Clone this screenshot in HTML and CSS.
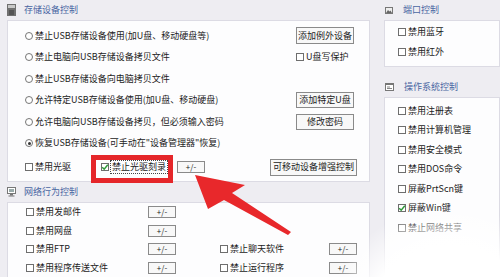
FILE: index.html
```html
<!DOCTYPE html>
<html>
<head>
<meta charset="utf-8">
<link rel="stylesheet" href="styles.css">
</head>
<body>
<div class="page">
  <div class="col-left">
    <div class="sec-head">
      <svg class="ico" width="9" height="12" viewBox="0 0 9 12"><rect x="0" y="0" width="9" height="12" fill="#707070"/><rect x="1" y="1" width="7" height="3" fill="#c8c8c8"/><rect x="2" y="6" width="5" height="5" fill="#555"/></svg>
      <span class="sec-title">存储设备控制</span>
    </div>
    <div class="panel storage">
      <div class="row">
        <span class="opt"><span class="radio"></span>禁止USB存储设备使用(加U盘、移动硬盘等)</span>
        <span class="slot"><span class="btn b17">添加例外设备</span></span>
      </div>
      <div class="row">
        <span class="opt"><span class="radio"></span>禁止电脑向USB存储设备拷贝文件</span>
        <span class="slot"><span class="opt"><span class="chk"></span>U盘写保护</span></span>
      </div>
      <div class="row">
        <span class="opt"><span class="radio"></span>禁止USB存储设备向电脑拷贝文件</span>
      </div>
      <div class="row">
        <span class="opt"><span class="radio"></span>允许特定USB存储设备使用(加U盘、移动硬盘)</span>
        <span class="slot"><span class="btn b16">添加特定U盘</span></span>
      </div>
      <div class="row">
        <span class="opt"><span class="radio"></span>允许电脑向USB存储设备拷贝，但必须输入密码</span>
        <span class="slot"><span class="btn b16">修改密码</span></span>
      </div>
      <div class="row">
        <span class="opt"><span class="radio on"></span>恢复USB存储设备(可手动在"设备管理器"恢复)</span>
      </div>
      <div class="row last">
        <span class="opt w76"><span class="chk"></span>禁用光驱</span>
        <span class="opt w76"><span class="chk on"><svg width="8" height="8" viewBox="0 0 8 8"><path d="M1.2 4.2 L3.2 6.2 L6.8 1.8" fill="none" stroke="#2f9a3a" stroke-width="1.5"/></svg></span><span class="focus">禁止光驱刻录</span></span>
        <span class="btn pm">+/-</span>
        <span class="btn b17 wide">可移动设备增强控制</span>
      </div>
    </div>
    <div class="sec-head">
      <svg class="ico" width="9" height="10" viewBox="0 0 9 10"><rect x="0.5" y="0.5" width="8" height="6" fill="#fff" stroke="#777"/><rect x="2" y="2" width="5" height="3" fill="#9aa"/><rect x="3" y="7" width="3" height="1.5" fill="#777"/><rect x="1.5" y="8.5" width="6" height="1" fill="#777"/></svg>
      <span class="sec-title">网络行为控制</span>
    </div>
    <div class="panel net">
      <span class="opt"><span class="chk"></span>禁用发邮件</span><span class="btn pm">+/-</span><span></span><span></span><span></span>
      <span class="opt"><span class="chk"></span>禁用网盘</span><span class="btn pm">+/-</span><span></span><span></span><span></span>
      <span class="opt"><span class="chk"></span>禁用FTP</span><span class="btn pm">+/-</span><span></span><span class="opt"><span class="chk"></span>禁止聊天软件</span><span class="btn pm">+/-</span>
      <span class="opt"><span class="chk"></span>禁用程序传送文件</span><span class="btn pm">+/-</span><span></span><span class="opt"><span class="chk"></span>禁止运行程序</span><span class="btn pm">+/-</span>
    </div>
  </div>
  <div class="col-right">
    <div class="sec-head r">
      <svg class="ico" width="8" height="7" viewBox="0 0 8 7"><rect x="0.5" y="0.5" width="7" height="6" fill="#eee" stroke="#777"/><path d="M1 6 L3 3 L4.5 4.5 L5.5 3.5 L7 6 Z" fill="#666"/></svg>
      <span class="sec-title">端口控制</span>
    </div>
    <div class="panel port">
      <span class="opt"><span class="chk"></span>禁用蓝牙</span>
      <span class="opt"><span class="chk"></span>禁用红外</span>
    </div>
    <div class="sec-head r gap">
      <svg class="ico" width="9" height="8" viewBox="0 0 9 8"><rect x="0.5" y="0.5" width="8" height="7" fill="#fff" stroke="#777"/><rect x="0.5" y="0.5" width="8" height="1.5" fill="#777"/><rect x="2" y="3.5" width="3" height="1" fill="#888"/><rect x="2" y="5" width="5" height="1" fill="#888"/></svg>
      <span class="sec-title">操作系统控制</span>
    </div>
    <div class="panel os">
      <span class="opt"><span class="chk"></span>禁用注册表</span>
      <span class="opt"><span class="chk"></span>禁用计算机管理</span>
      <span class="opt"><span class="chk"></span>禁用安全模式</span>
      <span class="opt"><span class="chk"></span>禁用DOS命令</span>
      <span class="opt"><span class="chk"></span>屏蔽PrtScn键</span>
      <span class="opt"><span class="chk on"><svg width="8" height="8" viewBox="0 0 8 8"><path d="M1.2 4.2 L3.2 6.2 L6.8 1.8" fill="none" stroke="#2f9a3a" stroke-width="1.5"/></svg></span>屏蔽Win键</span>
      <span class="opt"><span class="chk"></span>禁止网络共享</span>
    </div>
  </div>
</div>
<div class="redbox"></div>
<svg class="arrow" width="500" height="277" viewBox="0 0 500 277"><polygon points="195,175 245,185 232,193 291,232 288,235 224,200 208,209" fill="#e8282b"/></svg>
<div class="blob"></div>
</body>
</html>
```

FILE: styles.css
```css
html, body {
  margin: 0;
  padding: 0;
}
body {
  width: 500px;
  height: 277px;
  overflow: hidden;
  position: relative;
  background: #eeedf2;
  font-family: "Noto Sans CJK SC", "Noto Sans", sans-serif;
  font-size: 9px;
  line-height: 12px;
  color: #222;
}
.page {
  display: flex;
  align-items: flex-start;
}
.col-left {
  width: 363px;
  margin-left: 7px;
  flex: none;
}
.col-right {
  margin-left: 14px;
  flex: 1;
}
.sec-head {
  height: 20px;
  display: flex;
  align-items: center;
}
.sec-head .ico {
  flex: none;
  margin-right: 8px;
}
.sec-head.r {
  padding-left: 1px;
}
.sec-head.r .ico {
  margin-right: 10px;
}
.sec-head.gap {
  margin-top: 10px;
}
.sec-title {
  color: #4a66a2;
}
.panel {
  background: #fdfdfe;
  border: 1px solid #dcdbe4;
  box-sizing: border-box;
}
.storage {
  height: 162px;
  padding: 4px 15px 0 17px;
  display: flex;
  flex-direction: column;
}
.row {
  height: 21.5px;
  display: flex;
  align-items: center;
  justify-content: space-between;
  flex: none;
}
.row.last {
  height: 26px;
  justify-content: flex-start;
}
.slot {
  width: 58px;
  display: flex;
  align-items: center;
}
.opt {
  display: flex;
  align-items: center;
  white-space: nowrap;
}
.w76 {
  width: 76px;
  flex: none;
}
.radio {
  width: 8px;
  height: 8px;
  border: 1px solid #767676;
  border-radius: 50%;
  background: #fff;
  box-sizing: border-box;
  margin-right: 2px;
  flex: none;
  display: flex;
  align-items: center;
  justify-content: center;
}
.radio.on::after {
  content: "";
  width: 3px;
  height: 3px;
  border-radius: 50%;
  background: #333;
}
.chk {
  width: 8px;
  height: 8px;
  border: 1px solid #6e6e6e;
  background: #fff;
  box-sizing: border-box;
  margin-right: 2px;
  flex: none;
  position: relative;
}
.chk svg {
  position: absolute;
  left: -1px;
  top: -1px;
}
.focus {
  outline: 1px dotted #444;
  outline-offset: 0;
  padding: 0 1px;
}
.btn {
  display: flex;
  align-items: center;
  justify-content: center;
  box-sizing: border-box;
  border: 1px solid #8a8a8a;
  background: #f8f8f8;
  white-space: nowrap;
  flex: none;
}
.b17 {
  width: 58px;
  height: 17px;
}
.b16 {
  width: 58px;
  height: 16px;
}
.pm {
  width: 28px;
  height: 12px;
  font-size: 8px;
}
.row.last .pm {
  margin-left: 0;
}
.wide {
  width: 87px;
  margin-left: auto;
  margin-right: -3px;
}
.net {
  height: 80px;
  padding: 0 0 0 18px;
  display: grid;
  grid-template-columns: 122px 28px 44px 109px 28px;
  grid-auto-rows: 18.5px;
  align-items: center;
}
.port {
  height: 47px;
  padding: 1px 0 0 13px;
  display: flex;
  flex-direction: column;
}
.port .opt {
  height: 20px;
}
.os {
  height: 190px;
  padding: 2.75px 0 0 13px;
  display: flex;
  flex-direction: column;
}
.os .opt {
  height: 19.5px;
  flex: none;
}
.redbox {
  position: absolute;
  left: 91px;
  top: 155px;
  width: 82px;
  height: 28px;
  border: 5px solid #e5262a;
  box-sizing: border-box;
}
.arrow {
  position: absolute;
  left: 0;
  top: 0;
}
.blob {
  position: absolute;
  left: 0;
  top: 0;
  width: 500px;
  height: 277px;
  background: radial-gradient(circle at 450px 330px, #fff 0, #fff 85px, rgba(255,255,255,0) 125px);
  pointer-events: none;
}
```
